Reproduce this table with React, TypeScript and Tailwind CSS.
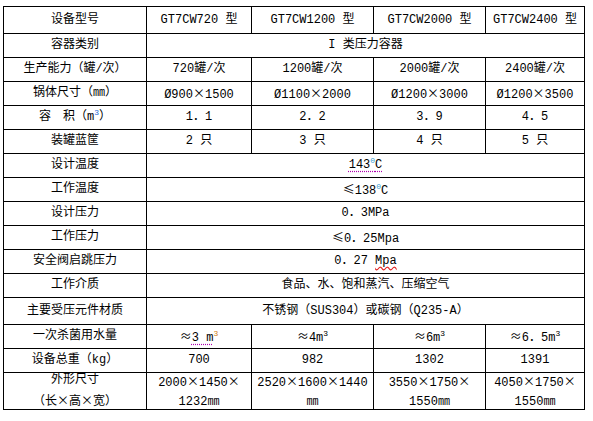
import React from 'react';

type Row = { label: React.ReactNode; cells: React.ReactNode[] };

// symbols that take the CJK font's wide glyphs, as in the reference
const W = ({ children }: { children: React.ReactNode }) => (
    <span style={{ fontFamily: '"Noto Sans CJK SC", sans-serif' }}>{children}</span>
);

const wide = (s: string) =>
    s.split(/([×≈≤])/).map((part, i) => (/^[×≈≤]$/.test(part) ? <W key={i}>{part}</W> : part));

const Sup = ({ children, color = 'text-black' }: { children: React.ReactNode; color?: string }) => (
    <span className={`relative -top-[5px] text-[8px] leading-none ${color}`}>{children}</span>
);

const Dotted = ({ children }: { children: React.ReactNode }) => (
    <span className="underline decoration-dotted decoration-[#b000b0] underline-offset-[3px]">{children}</span>
);

const rows: Row[] = [
    { label: '容器类别', cells: ['I 类压力容器'] },
    { label: '生产能力（罐/次）', cells: ['720罐/次', '1200罐/次', '2000罐/次', '2400罐/次'] },
    { label: '锅体尺寸（㎜）', cells: ['Ø900×1500', 'Ø1100×2000', 'Ø1200×3000', 'Ø1200×3500'] },
    {
        label: (
            <>
                容　积（m<Sup color="text-[#2a6cd6]">3</Sup>）
            </>
        ),
        cells: ['1．1', '2．2', '3．9', '4．5'],
    },
    { label: '装罐蓝筐', cells: ['2 只', '3 只', '4 只', '5 只'] },
    {
        label: '设计温度',
        cells: [
            <Dotted key="t1">
                143<Sup color="text-[#3aa0d0]">0</Sup>C
            </Dotted>,
        ],
    },
    {
        label: '工作温度',
        cells: [
            <span key="t2">
                <W>≤</W>138<Sup color="text-[#3aa0d0]">0</Sup>C
            </span>,
        ],
    },
    { label: '设计压力', cells: ['0．3MPa'] },
    { label: '工作压力', cells: ['≤0．25Mpa'] },
    {
        label: '安全阀启跳压力',
        cells: [
            <span key="p">
                0．27{' '}
                <span className="underline decoration-wavy decoration-[#e02020] underline-offset-[2px]">Mpa</span>
            </span>,
        ],
    },
    { label: '工作介质', cells: ['食品、水、饱和蒸汽、压缩空气'] },
    { label: '主要受压元件材质', cells: ['不锈钢（SUS304）或碳钢（Q235-A）'] },
    {
        label: '一次杀菌用水量',
        cells: [
            <span key="w1">
                <W>≈</W>
                <Dotted>3 m</Dotted>
                <Sup color="text-[#d08020]">3</Sup>
            </span>,
            <span key="w2">
                <W>≈</W>4m<Sup>3</Sup>
            </span>,
            <span key="w3">
                <W>≈</W>6m<Sup>3</Sup>
            </span>,
            <span key="w4">
                <W>≈</W>6．5m<Sup>3</Sup>
            </span>,
        ],
    },
    { label: '设备总重（kg）', cells: ['700', '982', '1302', '1391'] },
    {
        label: (
            <>
                外形尺寸
                <br />
                （长<W>×</W>高<W>×</W>宽）
            </>
        ),
        cells: [
            <>
                {wide('2000×1450×')}
                <br />
                1232㎜
            </>,
            <>
                {wide('2520×1600×1440')}
                <br />
                ㎜
            </>,
            <>
                {wide('3550×1750×')}
                <br />
                1550㎜
            </>,
            <>
                {wide('4050×1750×')}
                <br />
                1550㎜
            </>,
        ],
    },
];

const cell = 'flex items-center justify-center text-center border-l border-t border-black leading-[19px]';

const show = (c: React.ReactNode) => <div>{typeof c === 'string' ? wide(c) : c}</div>;

export default function App() {
    return (
        <div className="min-h-[421px] w-[593px] bg-white pl-[3px] pt-[6px] text-black">
            <div
                className="grid w-[582px] grid-cols-[143px_105px_122px_112px_99px] grid-rows-[27px_repeat(11,24px)_27px_24px_24px_37px] border-r border-b border-black text-[12px]"
                style={{ fontFamily: '"Liberation Mono", "Noto Sans CJK SC", monospace' }}
            >
                <div className={cell}>设备型号</div>
                {['GT7CW720 型', 'GT7CW1200 型', 'GT7CW2000 型', 'GT7CW2400 型'].map((h) => (
                    <div key={h} className={cell}>
                        {h}
                    </div>
                ))}
                {rows.map((r, i) => (
                    <React.Fragment key={i}>
                        <div className={cell}>{show(r.label)}</div>
                        {r.cells.length === 1 ? (
                            <div className={`${cell} col-span-4`}>{show(r.cells[0])}</div>
                        ) : (
                            r.cells.map((c, j) => (
                                <div key={j} className={cell}>
                                    {show(c)}
                                </div>
                            ))
                        )}
                    </React.Fragment>
                ))}
            </div>
        </div>
    );
}
